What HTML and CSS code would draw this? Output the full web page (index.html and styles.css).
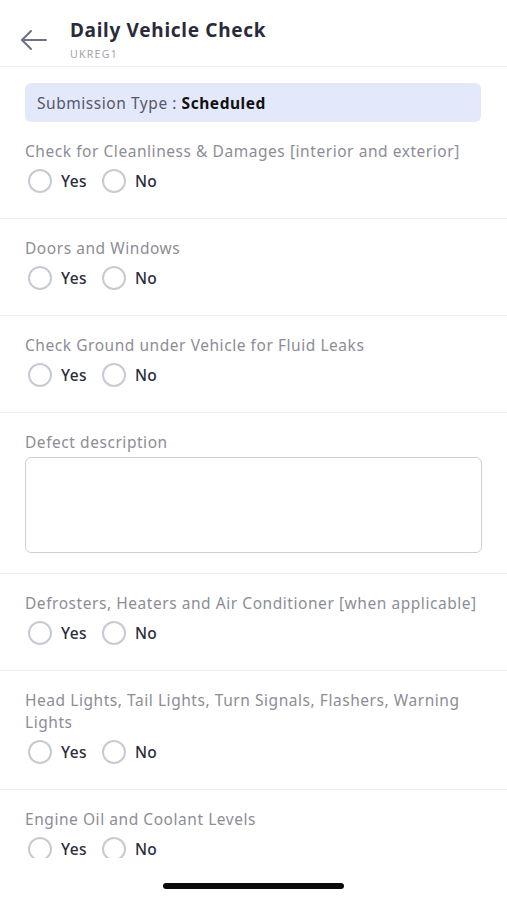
FILE: index.html
```html
<!DOCTYPE html>
<html lang="en">
<head>
<meta charset="utf-8">
<title>Daily Vehicle Check</title>
<link rel="stylesheet" href="styles.css">
</head>
<body>
<div class="screen">
  <header class="header">
    <button class="back" aria-label="Back">
      <svg width="28" height="22" viewBox="0 0 28 22" fill="none" stroke="#6e7283" stroke-width="2" stroke-linecap="round" stroke-linejoin="round">
        <path d="M2 11 H26"/>
        <path d="M11 2 L2 11 L11 20"/>
      </svg>
    </button>
    <div class="titles">
      <h1 class="title">Daily Vehicle Check</h1>
      <div class="subtitle">UKREG1</div>
    </div>
  </header>

  <main class="content">
    <div class="submission">Submission Type : <b>Scheduled</b></div>

    <section class="item">
      <div class="label">Check for Cleanliness &amp; Damages [interior and exterior]</div>
      <div class="radios">
        <span class="radio"><span class="circle"></span>Yes</span>
        <span class="radio"><span class="circle"></span>No</span>
      </div>
    </section>

    <section class="item">
      <div class="label">Doors and Windows</div>
      <div class="radios">
        <span class="radio"><span class="circle"></span>Yes</span>
        <span class="radio"><span class="circle"></span>No</span>
      </div>
    </section>

    <section class="item">
      <div class="label">Check Ground under Vehicle for Fluid Leaks</div>
      <div class="radios">
        <span class="radio"><span class="circle"></span>Yes</span>
        <span class="radio"><span class="circle"></span>No</span>
      </div>
    </section>

    <section class="item item-text">
      <div class="label">Defect description</div>
      <div class="textarea"></div>
    </section>

    <section class="item">
      <div class="label">Defrosters, Heaters and Air Conditioner [when applicable]</div>
      <div class="radios">
        <span class="radio"><span class="circle"></span>Yes</span>
        <span class="radio"><span class="circle"></span>No</span>
      </div>
    </section>

    <section class="item">
      <div class="label">Head Lights, Tail Lights, Turn Signals, Flashers, Warning Lights</div>
      <div class="radios">
        <span class="radio"><span class="circle"></span>Yes</span>
        <span class="radio"><span class="circle"></span>No</span>
      </div>
    </section>

    <section class="item">
      <div class="label">Engine Oil and Coolant Levels</div>
      <div class="radios">
        <span class="radio"><span class="circle"></span>Yes</span>
        <span class="radio"><span class="circle"></span>No</span>
      </div>
    </section>
  </main>

  <footer class="footer">
    <div class="home-indicator"></div>
  </footer>
</div>
</body>
</html>
```

FILE: styles.css
```css
* { box-sizing: border-box; }
html, body { margin: 0; padding: 0; background: #fff; }
body {
  font-family: "Noto Sans", "Open Sans", sans-serif;
  color: #2b2b3b;
}
.screen {
  width: 507px;
  height: 900px;
  display: flex;
  flex-direction: column;
  overflow: hidden;
}
.header {
  height: 67px;
  flex: none;
  display: flex;
  align-items: flex-start;
  border-bottom: 1px solid #f1f1f3;
  padding: 16px 0 0 20px;
}
.back {
  border: 0;
  background: none;
  padding: 0;
  margin: 13px 22px 0 0;
  width: 28px;
  height: 22px;
  display: flex;
}
.titles { display: flex; flex-direction: column; }
.title {
  margin: 0;
  font-size: 19px;
  line-height: 28px;
  font-weight: 700;
  color: #2a2a3a;
  letter-spacing: 0.7px;
}
.subtitle {
  font-size: 10.5px;
  line-height: 16px;
  color: #a3a3ad;
  letter-spacing: 1.3px;
  margin-top: 2px;
}
.content {
  flex: 1;
  overflow: hidden;
  padding-top: 16px;
}
.submission {
  margin: 0 26px 0 25px;
  height: 39px;
  background: #e3e9fb;
  border-radius: 6px;
  padding: 0 12px;
  display: flex;
  align-items: center;
  font-size: 15.5px;
  letter-spacing: 0.55px;
  color: #55576a;
  white-space: pre;
}
.submission b { color: #111; font-weight: 700; }
.item {
  padding: 18px 25px 25px;
  border-bottom: 1px solid #ececef;
}
.label {
  font-size: 15.5px;
  line-height: 22px;
  letter-spacing: 0.55px;
  color: #8d8d96;
}
.radios {
  display: flex;
  gap: 15px;
  margin-top: 7px;
  height: 24px;
  padding-left: 3px;
}
.radio {
  display: flex;
  align-items: center;
  gap: 9px;
  font-size: 15.5px;
  line-height: 16px;
  letter-spacing: 0.4px;
  font-weight: 500;
  color: #2b2b3b;
}
.circle {
  width: 24px;
  height: 24px;
  border-radius: 50%;
  border: 2px solid #c9c9d3;
}
.item-text { padding-bottom: 20px; }
.textarea {
  margin-top: 4px;
  height: 96px;
  border: 1.5px solid #cfcfd8;
  border-radius: 6px;
}
.footer {
  height: 42px;
  flex: none;
  display: flex;
  justify-content: center;
  padding-top: 25px;
}
.home-indicator {
  width: 181px;
  height: 6px;
  border-radius: 3px;
  background: #0a0a0a;
}
```
